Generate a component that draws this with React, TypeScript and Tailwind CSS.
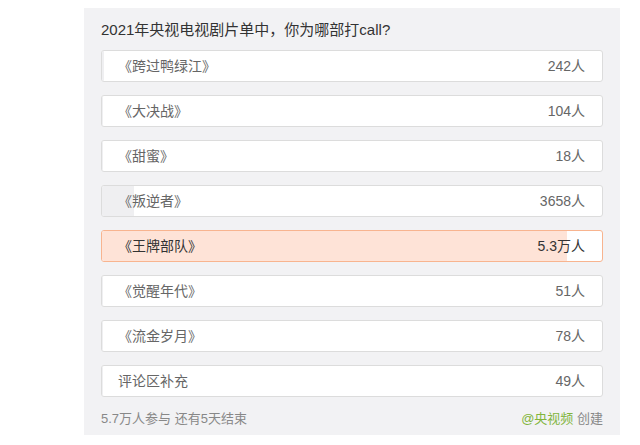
import React from "react";

const total = 57000;
const rows = [
  { label: "《跨过鸭绿江》", count: "242人", n: 242 },
  { label: "《大决战》", count: "104人", n: 104 },
  { label: "《甜蜜》", count: "18人", n: 18 },
  { label: "《叛逆者》", count: "3658人", n: 3658 },
  { label: "《王牌部队》", count: "5.3万人", n: 53000, selected: true },
  { label: "《觉醒年代》", count: "51人", n: 51 },
  { label: "《流金岁月》", count: "78人", n: 78 },
  { label: "评论区补充", count: "49人", n: 49 },
];

export default function App() {
  return (
    <div
      className="w-[640px] h-[445px] bg-white pt-[8px]"
      style={{ fontFamily: '"Liberation Sans", "Noto Sans CJK SC", sans-serif' }}
    >
      <div className="ml-[84px] w-[536px] h-[427px] bg-[#f2f2f4] px-[17px] pt-[10px]">
        <div className="text-[15px] leading-[24px] text-[#333333]">
          2021年央视电视剧片单中，你为哪部打call?
        </div>
        <div className="mt-[8px] flex flex-col gap-[13px]">
          {rows.map((r) => (
            <div
              key={r.label}
              className={
                "relative h-[32px] rounded-[3px] border overflow-hidden " +
                (r.selected ? "border-[#f8b48f] bg-white" : "border-[#dcdcdc] bg-white")
              }
            >
              <div
                className={
                  "absolute left-0 top-0 bottom-0 " +
                  (r.selected ? "bg-[#fee3d7]" : "bg-[#efeff1]")
                }
                style={{ width: `${(r.n / total) * 100}%` }}
              />
              <div className="relative flex h-full items-center justify-between pl-[16px] pr-[17px] text-[14px] text-[#666666]">
                <span className={r.selected ? "text-[#333333]" : ""}>{r.label}</span>
                <span className={r.selected ? "text-[#333333]" : ""}>{r.count}</span>
              </div>
            </div>
          ))}
        </div>
        <div className="mt-[12px] flex items-center justify-between text-[13px] leading-[20px] text-[#888888]">
          <span>5.7万人参与 还有5天结束</span>
          <span>
            <span className="text-[#82b53c]">@央视频</span> 创建
          </span>
        </div>
      </div>
    </div>
  );
}
